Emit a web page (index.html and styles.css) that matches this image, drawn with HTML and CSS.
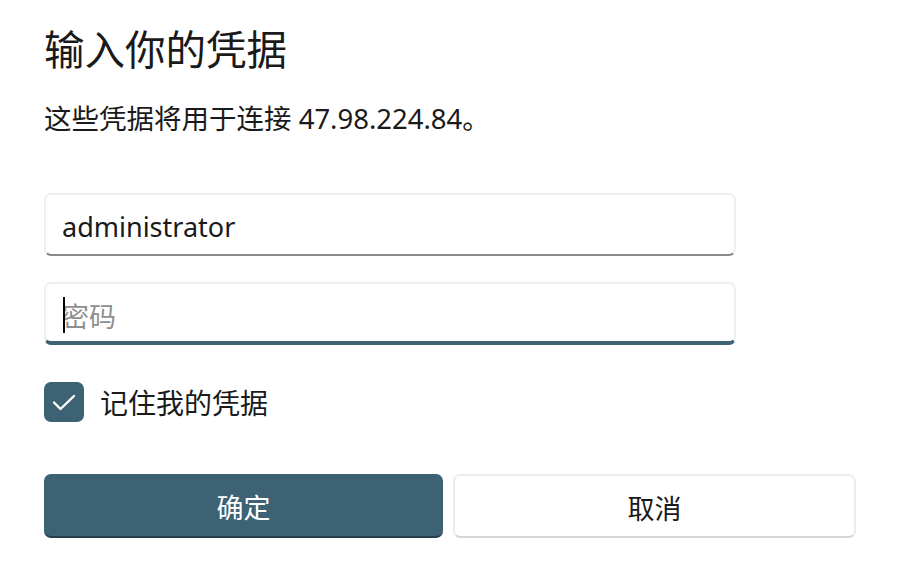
FILE: index.html
```html
<!DOCTYPE html>
<html lang="zh-CN">
  <head>
    <meta charset="UTF-8" />
    <title>输入你的凭据</title>
    <link rel="stylesheet" href="styles.css">
  </head>
  <body>
    <div id="wrap">
      <h1 class="title">输入你的凭据</h1>
      <p class="desc">这些凭据将用于连接 47.98.224.84。</p>
      <div class="fields">
        <div class="field">
          <input type="text" value="administrator" />
        </div>
        <div class="field on">
          <span class="caret"></span>
          <input type="password" placeholder="密码" />
        </div>
      </div>
      <label class="check">
        <span class="box">
          <svg class="ico-check" width="28" height="28" viewBox="0 0 28 28"><path d="M4 14.5l6.5 6.5L24 8" fill="none" stroke="#fff" stroke-width="2.4" stroke-linecap="round" stroke-linejoin="round"/></svg>
        </span>
        记住我的凭据
      </label>
      <div class="btns">
        <button class="btn-ok">确定</button>
        <button class="btn-cancel">取消</button>
      </div>
    </div>
  </body>
</html>
```

FILE: styles.css
```css
* {
  box-sizing: border-box;
}
html,
body {
  margin: 0;
  padding: 0;
  background: #fff;
  font-family: "Noto Sans", "Noto Sans CJK SC", sans-serif;
  color: #1a1a1a;
}
#wrap {
  width: 904px;
  padding: 24px 48px 0 44px;
}
.title {
  margin: 0;
  font-size: 40.5px;
  font-weight: normal;
  line-height: 52px;
}
.desc {
  margin: 25px 0 0;
  font-size: 27.5px;
  line-height: 36px;
}
.fields {
  display: flex;
  flex-direction: column;
  gap: 26px;
  margin-top: 56px;
  width: 692px;
}
.field {
  position: relative;
  height: 63px;
  border: 2px solid #efefef;
  border-bottom: 2px solid #8a8a8a;
  border-radius: 7px;
  background: #fff;
  display: flex;
  align-items: center;
}
.field.on {
  border-bottom: 4px solid #3c6274;
}
.field input {
  width: 100%;
  border: 0;
  outline: 0;
  background: transparent;
  padding: 4px 16px 0;
  font-family: "Noto Sans", "Noto Sans CJK SC", sans-serif;
  font-size: 27px;
  color: #1a1a1a;
}
.field input::placeholder {
  color: #8f8f8f;
}
.field.on input {
  padding-top: 8px;
}
.caret {
  position: absolute;
  left: 17px;
  top: 13px;
  width: 2px;
  height: 36px;
  background: #000;
}
.check {
  display: flex;
  align-items: center;
  gap: 16px;
  margin-top: 37px;
  font-size: 28px;
}
.box {
  display: flex;
  justify-content: center;
  align-items: center;
  flex: none;
  width: 40px;
  height: 40px;
  border-radius: 7px;
  background: #3c6274;
}
.ico-check {
  display: block;
  width: 28px;
  height: 28px;
}
.btns {
  display: flex;
  gap: 10px;
  margin-top: 52px;
}
.btns button {
  flex: 1;
  height: 64px;
  border-radius: 7px;
  font-family: "Noto Sans", "Noto Sans CJK SC", sans-serif;
  font-size: 27px;
  padding-top: 4px;
  cursor: pointer;
}
.btn-ok {
  color: #fff;
  background: #3c6274;
  border: 0;
  border-bottom: 2px solid #263f4b;
}
.btn-cancel {
  color: #1a1a1a;
  background: #fff;
  border: 2px solid #ececec;
  border-bottom-color: #d6d6d6;
}
```
